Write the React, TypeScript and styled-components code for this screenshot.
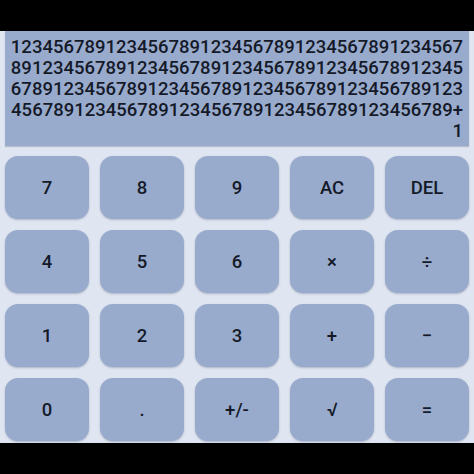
import React from "react";
import styled, { createGlobalStyle } from "styled-components";

const Global = createGlobalStyle`
  html, body { margin: 0; padding: 0; background: #000; }
  body { font-family: Roboto, "Noto Sans", sans-serif; }
`;

const Page = styled.div`
  width: 474px;
  height: 474px;
  display: flex;
  flex-direction: column;
  background: #000;
`;

const Bar = styled.div`
  height: 31px;
  flex: none;
  background: #000;
`;

const Main = styled.main`
  flex: 1;
  background: #dfe5f1;
  padding: 0 5px 2px;
  display: flex;
  flex-direction: column;
  gap: 10px;
`;

const Display = styled.div`
  height: 115px;
  box-sizing: border-box;
  background: #99abcd;
  padding: 6px 6px 4px 4px;
  display: flex;
  justify-content: flex-end;
  overflow: hidden;
  box-shadow: 0 1px 1px rgba(60, 70, 100, 0.25);
`;

const Readout = styled.div`
  width: calc(43ch + 0.5px);
  font-size: 18.5px;
  line-height: 21px;
  font-weight: 500;
  color: #151a29;
  text-align: right;
  word-break: break-all;
`;

const Keypad = styled.div`
  display: grid;
  grid-template-columns: repeat(5, 84px);
  grid-auto-rows: 63px;
  gap: 11px;
`;

const Key = styled.button`
  border: none;
  border-radius: 13px;
  background: #98abcd;
  color: #151a29;
  font-family: Roboto, "Noto Sans", sans-serif;
  font-size: 18.5px;
  font-weight: 500;
  display: flex;
  align-items: center;
  justify-content: center;
  padding: 0;
  box-shadow: 0 1px 2px rgba(60, 70, 100, 0.3);
`;

const keys = [
  "7", "8", "9", "AC", "DEL",
  "4", "5", "6", "×", "÷",
  "1", "2", "3", "+", "−",
  "0", ".", "+/-", "√", "=",
];

export default function App() {
  const text = "123456789".repeat(19) + "+1";
  return (
    <Page>
      <Global />
      <Bar />
      <Main>
        <Display>
          <Readout>{text}</Readout>
        </Display>
        <Keypad>
          {keys.map((k) => (
            <Key key={k}>{k}</Key>
          ))}
        </Keypad>
      </Main>
      <Bar />
    </Page>
  );
}
